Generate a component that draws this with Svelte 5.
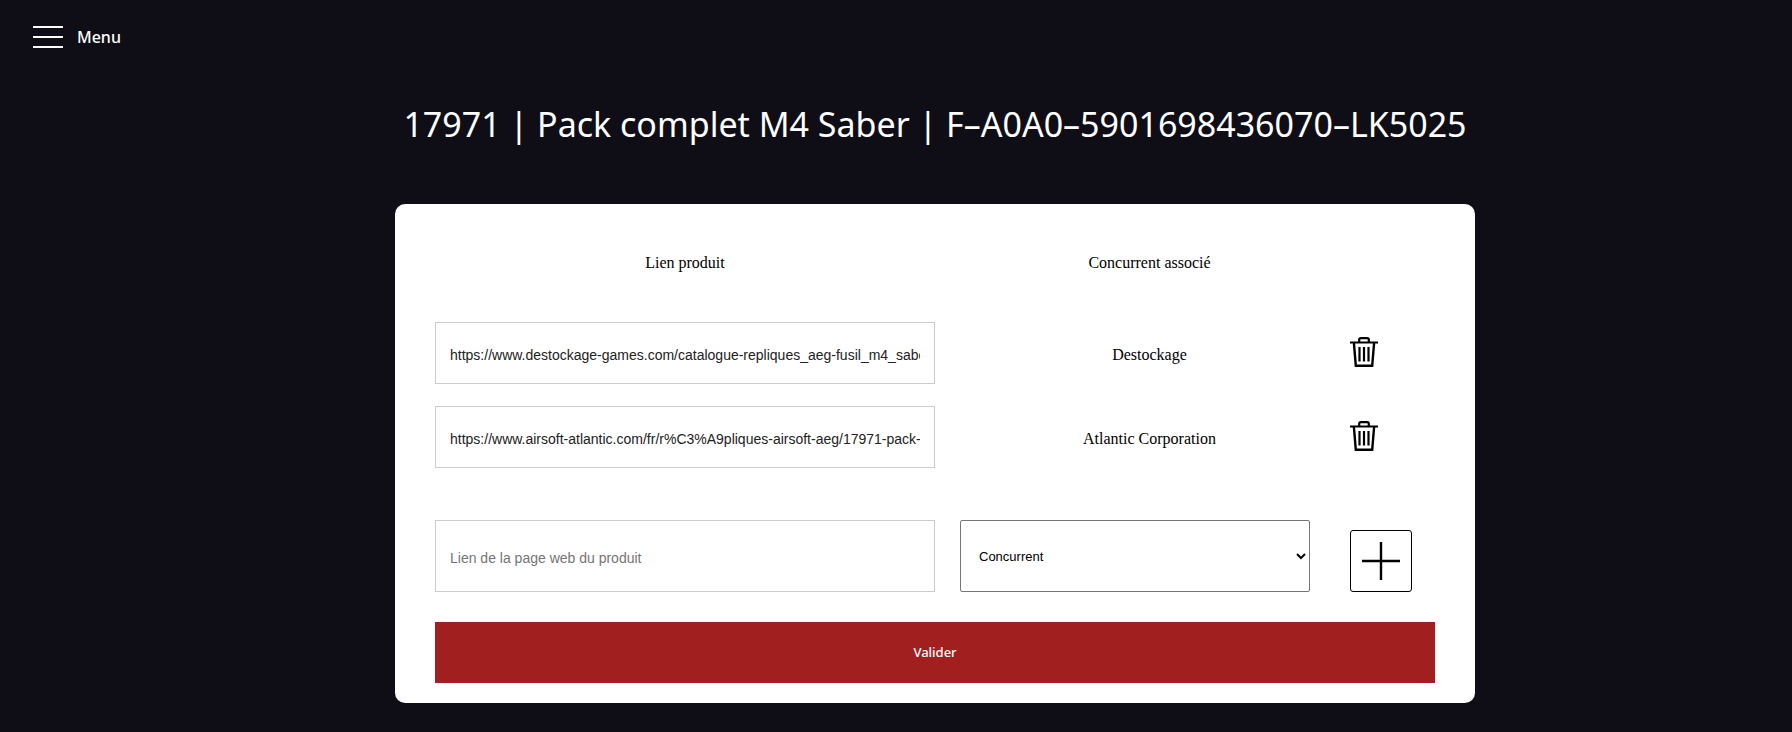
<script>
  let links = $state([
    {
      url: 'https://www.destockage-games.com/catalogue-repliques_aeg-fusil_m4_saber.html',
      competitor: 'Destockage',
    },
    {
      url: 'https://www.airsoft-atlantic.com/fr/r%C3%A9pliques-airsoft-aeg/17971-pack-complet-m4-saber.html',
      competitor: 'Atlantic Corporation',
    },
  ]);
  const competitors = ['Destockage', 'Atlantic Corporation'];
  let newUrl = $state('');
  let newCompetitor = $state('');

  function remove(index) {
    links.splice(index, 1);
  }

  function add() {
    if (!newUrl || !newCompetitor) return;
    links.push({ url: newUrl, competitor: newCompetitor });
    newUrl = '';
    newCompetitor = '';
  }
</script>

<header>
  <button class="menu" type="button">
    <span class="bars"><i></i><i></i><i></i></span>
    Menu
  </button>
</header>

<main>
  <h1>17971 | Pack complet M4 Saber | F–A0A0–5901698436070–LK5025</h1>

  <form class="card" onsubmit={(e) => e.preventDefault()}>
    <table>
      <thead>
        <tr>
          <th class="link">Lien produit</th>
          <th class="name">Concurrent associé</th>
          <td class="action"></td>
        </tr>
      </thead>
      <tbody>
        {#each links as item, i}
          <tr>
            <td><input type="text" aria-label="Lien produit" bind:value={item.url} /></td>
            <td class="name">{item.competitor}</td>
            <td>
              <button class="trash" type="button" aria-label="Supprimer" onclick={() => remove(i)}>
                <svg width="28" height="30" viewBox="0 0 28 30" fill="none" stroke="#000">
                  <path d="M9.2 5V2.6Q9.2 1.1 11 1.1h6q1.8 0 1.8 1.5V5" stroke-width="2.2" />
                  <path d="M0 5.5h28" stroke-width="2" />
                  <path d="M3.9 6l1.9 22.7h16.4L24.1 6" stroke-width="2.4" />
                  <path d="M9.5 10v14.5M14 10v14.5M18.5 10v14.5" stroke-width="2.2" />
                </svg>
              </button>
            </td>
          </tr>
        {/each}
      </tbody>
    </table>

    <div class="new">
      <input type="text" aria-label="Lien de la page web du produit" placeholder="Lien de la page web du produit" bind:value={newUrl} />
      <select aria-label="Concurrent" bind:value={newCompetitor}>
        <option value="">Concurrent</option>
        {#each competitors as name}
          <option value={name}>{name}</option>
        {/each}
      </select>
      <button class="plus" type="button" aria-label="Ajouter" onclick={add}>
        <svg width="40" height="40" viewBox="0 0 40 40" stroke="#000" stroke-width="2.4">
          <path d="M1 20h38M20 1v38" />
        </svg>
      </button>
    </div>

    <button class="submit" type="submit">Valider</button>
  </form>
</main>

<style>
  :global(body) {
    margin: 0;
    background: #0f0e17;
  }
  header {
    padding: 23px 32px 0;
  }
  .menu {
    display: flex;
    align-items: center;
    gap: 14px;
    padding: 0;
    border: 0;
    background: none;
    color: #fff;
    font: 500 16px/28px 'Noto Sans', sans-serif;
    cursor: pointer;
  }
  .bars {
    display: flex;
    flex-direction: column;
    gap: 8px;
    width: 30px;
    margin-left: 1px;
  }
  .bars i {
    height: 2px;
    background: #fff;
  }
  main {
    padding: 0 0 29px 78px;
  }
  h1 {
    margin: 0;
    padding: 50px 0 57px;
    color: #fff;
    font: 400 34px/46px 'Noto Sans', sans-serif;
    text-align: center;
  }
  .card {
    box-sizing: border-box;
    max-width: 1080px;
    margin: 0 auto;
    padding: 48px 40px 20px;
    border-radius: 10px;
    background: #fff;
    font: 16px/22px 'Liberation Serif', serif;
  }
  table {
    width: 100%;
    table-layout: fixed;
    border-collapse: collapse;
  }
  th,
  td {
    box-sizing: border-box;
  }
  th {
    padding: 0 0 48px;
    font-weight: 400;
    text-align: center;
  }
  td {
    padding: 0 0 22px;
  }
  .link {
    width: 50%;
  }
  th.name {
    width: 41.5%;
    padding-left: 14px;
  }
  td.name {
    padding: 4px 0 22px 14px;
    text-align: center;
  }
  input {
    display: block;
    box-sizing: border-box;
    width: 100%;
    height: 62px;
    padding: 4px 14px 0;
    border: 1px solid #ccc;
    background: #fff;
    color: #222;
    font: 14px 'Liberation Sans', sans-serif;
  }
  input::placeholder {
    color: #757575;
  }
  .trash {
    display: block;
    margin: 0;
    padding: 0 0 2px;
    border: 0;
    background: none;
    cursor: pointer;
  }
  .trash svg,
  .plus svg {
    display: block;
  }
  .new {
    display: grid;
    grid-template-columns: 50% 41.5% 8.5%;
    align-items: end;
    padding: 30px 0;
  }
  .new input {
    height: 72px;
  }
  select {
    height: 72px;
    margin: 0 40px 0 25px;
    padding: 0 0 0 14px;
    border: 1px solid #767676;
    border-radius: 2px;
    background: #fff;
    color: #000;
    font: 13px 'Liberation Sans', sans-serif;
  }
  .plus {
    display: grid;
    place-items: center;
    box-sizing: border-box;
    width: 62px;
    height: 62px;
    padding: 0;
    border: 1px solid #000;
    border-radius: 3px;
    background: #fff;
    cursor: pointer;
  }
  .submit {
    display: block;
    width: 100%;
    height: 61px;
    padding: 0 0 2px;
    border: 0;
    background: #a21f1f;
    color: #fff;
    font: 500 13px 'Noto Sans', sans-serif;
    cursor: pointer;
  }
</style>
